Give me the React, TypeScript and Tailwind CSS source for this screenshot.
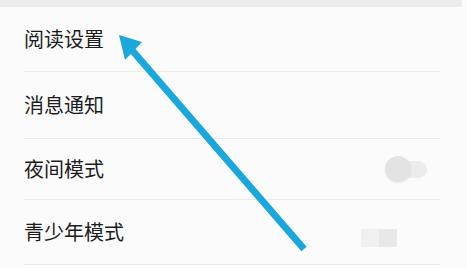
const rows = [
  { label: '阅读设置', h: 'h-[65px]' },
  { label: '消息通知', h: 'h-[67px]' },
  { label: '夜间模式', h: 'h-[61px]', toggle: true },
  { label: '青少年模式', h: 'h-[65px]' },
]

function Toggle() {
  return (
    <div className="relative h-[26px] w-[42px]">
      <div className="absolute right-0 top-[5px] h-[17px] w-[36px] rounded-full bg-[#ececec]" />
      <div className="absolute left-0 top-0 h-[26px] w-[26px] rounded-full bg-[#e3e3e3] shadow-[0_1px_2px_rgba(0,0,0,0.08)]" />
    </div>
  )
}

export default function App() {
  return (
    <div className="relative h-[268px] w-[467px] overflow-hidden bg-[#fbfbfb] font-['Noto_Sans_CJK_SC',sans-serif]">
      <div className="h-[7px] w-[462px] bg-[#ececec]" />
      <div className="w-[462px]">
        {rows.map((row) => (
          <div key={row.label} className={`${row.h} ml-6 mr-[22px] flex items-center justify-between border-b border-[#ebebeb] pr-[13px]`}>
            <span className="text-[20px] leading-none text-[#1c1c1c]">{row.label}</span>
            {row.toggle && <Toggle />}
          </div>
        ))}
      </div>

      {/* faint watermark */}
      <div className="absolute left-[361px] top-[229px] flex">
        <div className="h-[18px] w-[18px] bg-[#f0f0f0]" />
        <div className="h-[18px] w-[18px] bg-[#e8e8e8]" />
      </div>

      {/* annotation arrow */}
      <svg className="pointer-events-none absolute left-0 top-0" width="467" height="268" viewBox="0 0 467 268">
        <line x1="131" y1="49" x2="304" y2="249" stroke="#1aa8dc" strokeWidth="7" />
        <polygon points="119,35 142,42 125,60" fill="#1aa8dc" />
      </svg>
    </div>
  )
}
